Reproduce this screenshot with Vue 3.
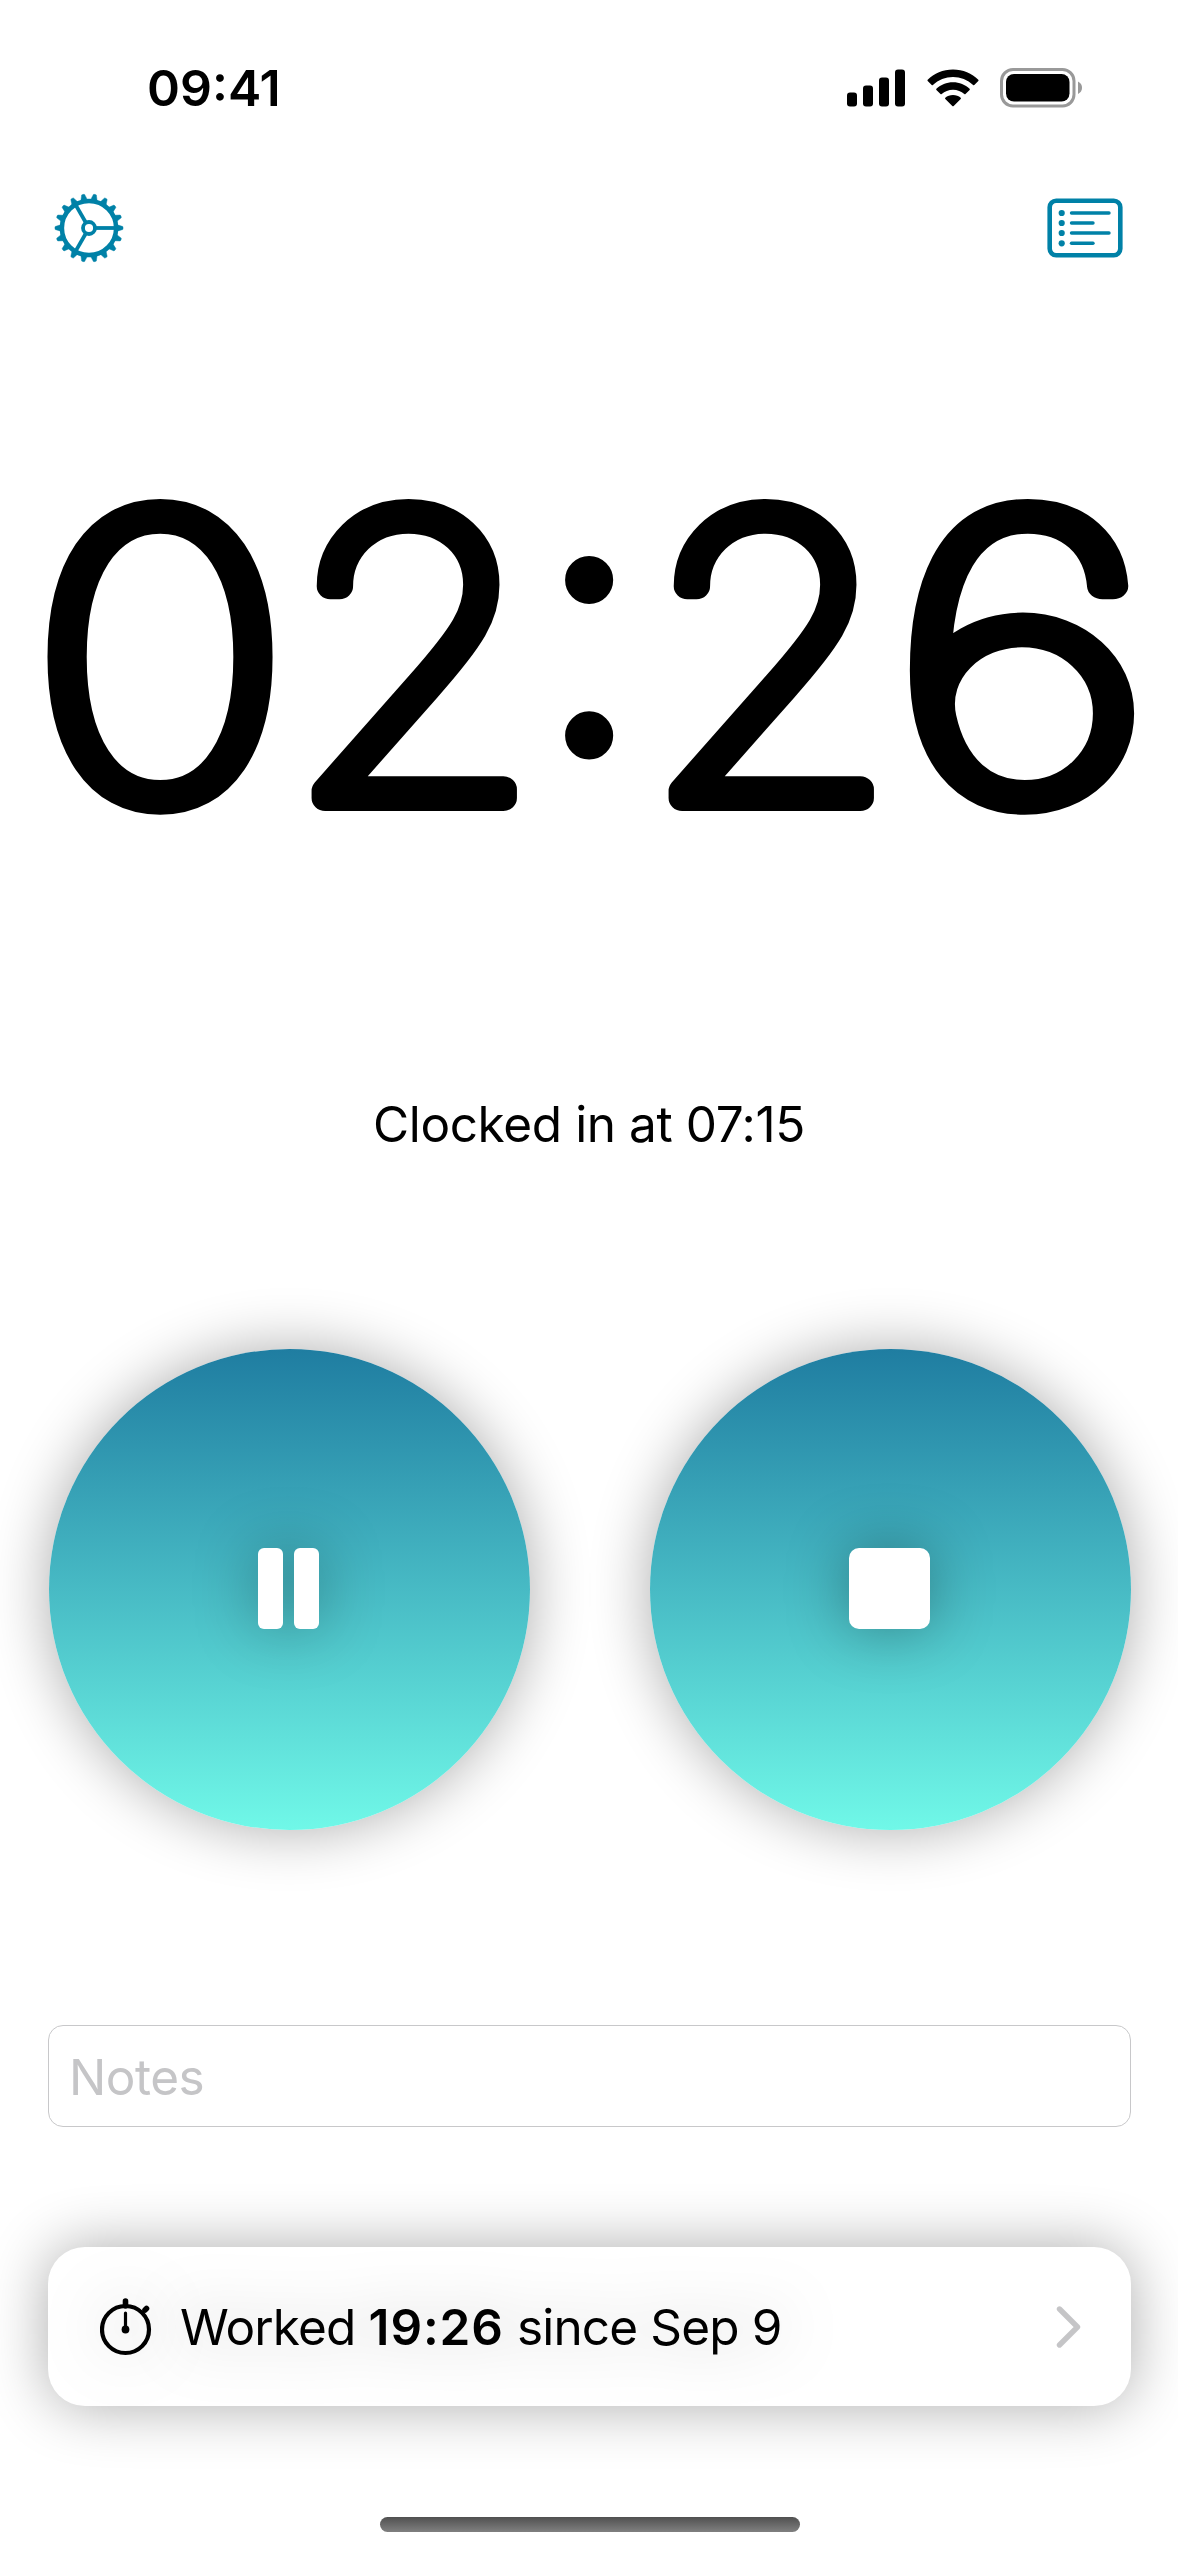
<script setup>
const bars = [
  { x: 0, h: 14 },
  { x: 16, h: 21 },
  { x: 32, h: 29 },
  { x: 48, h: 37 },
]
const teeth = Array.from({ length: 18 }, (_, i) => i * 20)
const rows = [
  { y: 15.5, end: 62 },
  { y: 25.5, end: 46 },
  { y: 35.5, end: 62 },
  { y: 45.8, end: 46 },
]
// Elapsed time, each glyph widened to fill the row edge to edge
const glyphs = [
  { c: '0', x: 30.5, y: 798, s: 1.13 },
  { c: '2', x: 287.5, y: 798, s: 1.047 },
  { c: ':', x: 544.5, y: 742.5, s: 1 },
  { c: '2', x: 644.5, y: 798, s: 1.047 },
  { c: '6', x: 892, y: 798, s: 1.187 },
]
</script>

<template>
  <main class="screen">
    <header class="status">
      <span class="clock">09:41</span>
      <div class="indicators">
        <svg class="signal" width="58" height="38" viewBox="0 0 58 38">
          <rect v-for="b in bars" :key="b.x" :x="b.x" :y="37.5 - b.h" width="10" :height="b.h" rx="3" />
        </svg>
        <svg class="wifi" width="52" height="38" viewBox="0 0 52 38">
          <path d="M26 .5C36 .5 45 4.500 51.300 10.800Q51.900 11.400 51.300 12L47.300 16Q46.700 16.500 46.100 16C40.500 10.800 33.500 8 26 8S11.500 10.800 5.900 16Q5.300 16.500 4.700 16L.7 12Q.1 11.400 .7 10.800C7 4.500 16 .5 26 .5Z" />
          <path d="M26 13.300C32.500 13.300 38.200 15.700 42.600 19.800Q43.200 20.400 42.600 21L38.500 25Q37.900 25.500 37.300 25C34.300 22.400 30.400 20.800 26 20.800S17.700 22.400 14.700 25Q14.100 25.500 13.500 25L9.400 21Q8.800 20.400 9.400 19.800C13.800 15.700 19.500 13.300 26 13.300Z" />
          <path d="M26 26C29 26 31.700 27 33.700 28.700Q34.300 29.300 33.700 29.900L26.700 37Q26 37.600 25.300 37L18.300 29.900Q17.700 29.300 18.300 28.700C20.300 27 23 26 26 26Z" />
        </svg>
        <svg class="battery" width="84" height="40" viewBox="0 0 84 40">
          <rect x="1.500" y="1.500" width="72.500" height="36.500" rx="11.500" fill="none" stroke="#999" stroke-width="3" />
          <rect x="6" y="6" width="63.500" height="27.500" rx="8" />
          <path d="M78 13.500Q82 15.500 82 19.700T78 26Z" fill="#999" />
        </svg>
      </div>
    </header>

    <nav class="toolbar">
      <svg width="70" height="70" viewBox="-35 -35 70 70" fill="none" stroke="#0081a7">
        <circle r="27.100" stroke-width="4.500" />
        <circle r="6" stroke-width="3.800" />
        <path v-for="a in [0, 120, 240]" :key="a" d="M7 0H27" stroke-width="3.800" :transform="`rotate(${a})`" />
        <path v-for="a in teeth" :key="a" d="M28.500-3.200 33.800-1.500Q34.500 0 33.800 1.500L28.500 3.200Z" fill="#0081a7" stroke-width=".4" :transform="`rotate(${a})`" />
      </svg>
      <svg width="76" height="60" viewBox="0 0 76 60" fill="none" stroke="#0081a7" stroke-linecap="round">
        <rect x="2.700" y="2.700" width="70.600" height="54.500" rx="6.500" stroke-width="4.600" />
        <g v-for="r in rows" :key="r.y">
          <circle cx="14.700" :cy="r.y - .5" r="3.100" fill="#0081a7" stroke="none" />
          <path :d="`M24.500 ${r.y - .5}H${r.end}`" stroke-width="3.400" />
        </g>
      </svg>
    </nav>

    <svg class="timer" width="1178" height="580" viewBox="0 380 1178 580">
      <text
        v-for="(g, i) in glyphs"
        :key="i"
        :class="{ colon: g.c === ':' }"
        :transform="`translate(${g.x} ${g.y}) scale(${g.s} 1)`"
      >{{ g.c }}</text>
    </svg>

    <p class="since">Clocked in at 07:15</p>

    <section class="actions">
      <button class="round" aria-label="Pause">
        <svg width="81" height="81" viewBox="0 0 81 81" fill="#fff">
          <rect x="10" width="25" height="81" rx="6" />
          <rect x="46" width="25" height="81" rx="6" />
        </svg>
      </button>
      <button class="round" aria-label="Stop">
        <svg width="81" height="81" viewBox="0 0 81 81" fill="#fff">
          <rect width="81" height="81" rx="10" />
        </svg>
      </button>
    </section>

    <input class="notes" type="text" placeholder="Notes" />

    <section class="card">
      <svg class="watch" width="52" height="58" viewBox="0 0 52 58" fill="none" stroke="#000" stroke-linecap="round">
        <circle cx="25.500" cy="31.500" r="23.500" stroke-width="4.200" />
        <path d="M25.500 3V8M45 12L46.500 10.500" stroke-width="5.600" />
        <path d="M25.500 15V32" stroke-width="3.200" />
        <circle cx="25.500" cy="31.500" r="3.900" fill="#000" stroke="none" />
      </svg>
      <p class="worked">Worked <b>19:26</b> since Sep 9</p>
      <svg class="chevron" width="26" height="44" viewBox="0 0 26 44" fill="none" stroke="#c5c5c7" stroke-width="5.400" stroke-linecap="round" stroke-linejoin="round">
        <path d="M3.500 4 21.500 22 3.500 40" />
      </svg>
    </section>

    <div class="home"></div>
  </main>
</template>

<style>
body {
  margin: 0;
  background: #fff;
}
</style>

<style scoped>
.screen {
  box-sizing: border-box;
  width: 1178px;
  height: 2556px;
  display: flex;
  flex-direction: column;
  overflow: hidden;
  background: #fff;
  color: #000;
  font-family: Inter, "Liberation Sans", sans-serif;
  font-size: 49.5px;
}
.status {
  display: flex;
  justify-content: space-between;
  align-items: center;
  height: 175px;
  padding: 0 94px 0 147px;
}
.clock {
  font-size: 50px;
  font-weight: 600;
}
.indicators {
  display: flex;
  align-items: center;
}
.wifi {
  margin-left: 22px;
}
.battery {
  margin-left: 21px;
}
.toolbar {
  display: flex;
  justify-content: space-between;
  align-items: center;
  height: 105px;
  padding: 0 55px 0 53.5px;
}
.timer {
  display: block;
  flex: none;
  margin-top: 100px;
}
.timer text {
  font-size: 388px;
  font-weight: 100;
  font-variation-settings: "opsz" 14;
  fill: #000;
  stroke: #000;
  stroke-width: 26px;
  stroke-linejoin: round;
}
.timer .colon {
  font-size: 330px;
  stroke-width: 31px;
}
.since {
  margin: 134px 0 0;
  height: 60px;
  line-height: 60px;
  text-align: center;
  letter-spacing: -.4px;
}
.actions {
  display: flex;
  justify-content: space-between;
  margin-top: 195px;
  padding: 0 47.5px 0 48.5px;
}
.round {
  display: flex;
  align-items: center;
  justify-content: center;
  width: 481px;
  height: 481px;
  padding: 0 1px 2px 0;
  border: 0;
  border-radius: 50%;
  background: linear-gradient(#1f7da1, #70f8e8);
  box-shadow: 0 0 60px rgba(0, 0, 0, .33);
}
.round svg {
  overflow: visible;
  filter: drop-shadow(0 0 30px rgba(0, 0, 0, .33));
}
.notes {
  box-sizing: border-box;
  height: 102px;
  margin: 195px 47px 0 48px;
  padding: 1px 20px 0;
  border: 1px solid #c8c8ca;
  border-radius: 15px;
  background: #fff;
  font: inherit;
  letter-spacing: -.5px;
}
.notes::placeholder {
  color: #c5c5c7;
  opacity: 1;
}
.card {
  display: flex;
  align-items: center;
  box-sizing: border-box;
  height: 159px;
  margin: 120px 47px 0 48px;
  padding: 0 49px 0 52px;
  border-radius: 37px;
  background: #fff;
  box-shadow: 0 0 60px rgba(0, 0, 0, .33);
}
.watch,
.worked {
  filter: drop-shadow(0 0 30px rgba(0, 0, 0, .25));
}
.worked {
  flex: 1;
  margin: 0 0 0 28px;
  white-space: pre;
  letter-spacing: -.85px;
}
.worked b {
  font-weight: 600;
  letter-spacing: .9px;
}
.home {
  width: 420px;
  height: 15px;
  margin: 111px 0 0 380px;
  border-radius: 8px;
  background: linear-gradient(#505050, #808080);
}
</style>
